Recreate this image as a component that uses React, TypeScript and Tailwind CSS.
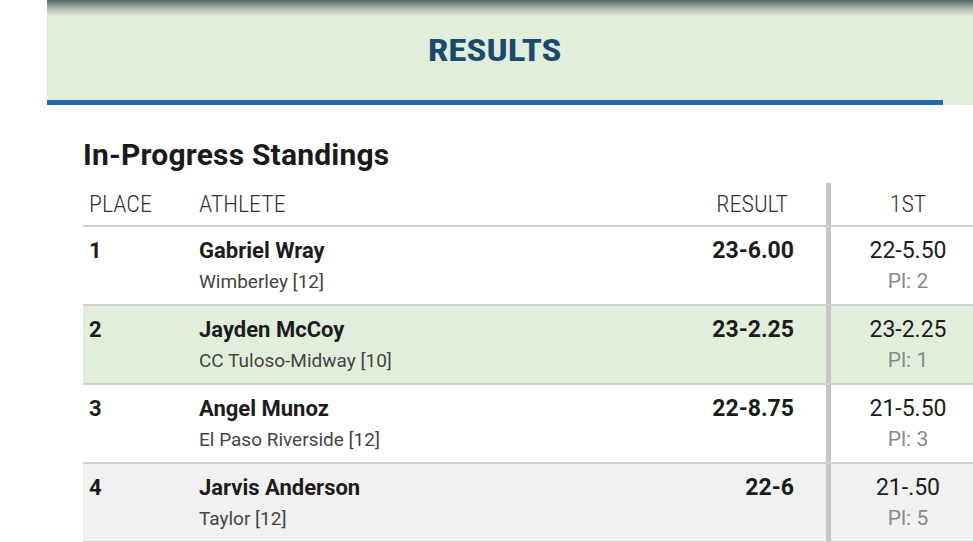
const rows = [
  { place: "1", name: "Gabriel Wray", school: "Wimberley [12]", result: "23-6.00", first: "22-5.50", pl: "2", bg: "bg-white" },
  { place: "2", name: "Jayden McCoy", school: "CC Tuloso-Midway [10]", result: "23-2.25", first: "23-2.25", pl: "1", bg: "bg-[#e2eedc]" },
  { place: "3", name: "Angel Munoz", school: "El Paso Riverside [12]", result: "22-8.75", first: "21-5.50", pl: "3", bg: "bg-white" },
  { place: "4", name: "Jarvis Anderson", school: "Taylor [12]", result: "22-6", first: "21-.50", pl: "5", bg: "bg-[#f1f1f1]" },
];

export default function App() {
  return (
    <div className="w-[973px] h-[542px] overflow-hidden bg-white text-[#1c1c1c] font-[Roboto,sans-serif]">
      {/* results banner */}
      <div className="ml-[47px] relative bg-[#e0eeda] h-[105px] flex flex-col">
        <div className="absolute top-0 left-0 right-0 h-[16px] bg-gradient-to-b from-[#4f6567] via-[#a9b7a8] to-transparent" />
        <div className="w-[896px] h-[100px] flex items-center justify-center">
          <span className="text-[32px] font-bold text-[#1b4a70] font-['Roboto_Condensed',Roboto,sans-serif] scale-x-[1.16]">RESULTS</span>
        </div>
        <div className="w-[896px] h-[5px] bg-[#1f6cb0]" />
      </div>

      <div className="ml-[83px] w-[902px]">
        <h2 className="mt-[32px] text-[30px] leading-[36px] font-bold text-[#1a1a1a] tracking-[0.2px]">In-Progress Standings</h2>

        <div className="mt-[10px] flex h-[44px] items-center border-b-2 border-[#cfcfcf] text-[24px] font-light text-[#333] font-['Roboto_Condensed',Roboto,sans-serif]">
          <div className="w-[116px] pl-[6px]">PLACE</div>
          <div className="flex-1">ATHLETE</div>
          <div className="w-[177px] pr-[38px] text-right">RESULT</div>
          <div className="w-[5px] self-stretch bg-[#c6c6c6]" />
          <div className="w-[154px] text-center">1ST</div>
        </div>

        {rows.map((r) => (
          <div key={r.place} className={`flex h-[79px] border-b-2 border-[#d0d0d0] ${r.bg}`}>
            <div className="w-[116px] pl-[6px] pt-[10px] text-[22px] font-bold leading-[28px]">{r.place}</div>
            <div className="flex-1 pt-[10px]">
              <div className="text-[22px] font-bold leading-[28px]">{r.name}</div>
              <div className="mt-[4px] text-[19px] leading-[26px] text-[#444]">{r.school}</div>
            </div>
            <div className="w-[177px] pr-[32px] pt-[10px] text-right text-[23px] font-bold leading-[28px]">{r.result}</div>
            <div className="w-[5px] bg-[#c6c6c6]" />
            <div className="w-[154px] pt-[10px] text-center">
              <div className="text-[23px] leading-[28px]">{r.first}</div>
              <div className="mt-[3px] text-[21px] leading-[26px] text-[#8a8a8a]">Pl: {r.pl}</div>
            </div>
          </div>
        ))}
      </div>
    </div>
  );
}
